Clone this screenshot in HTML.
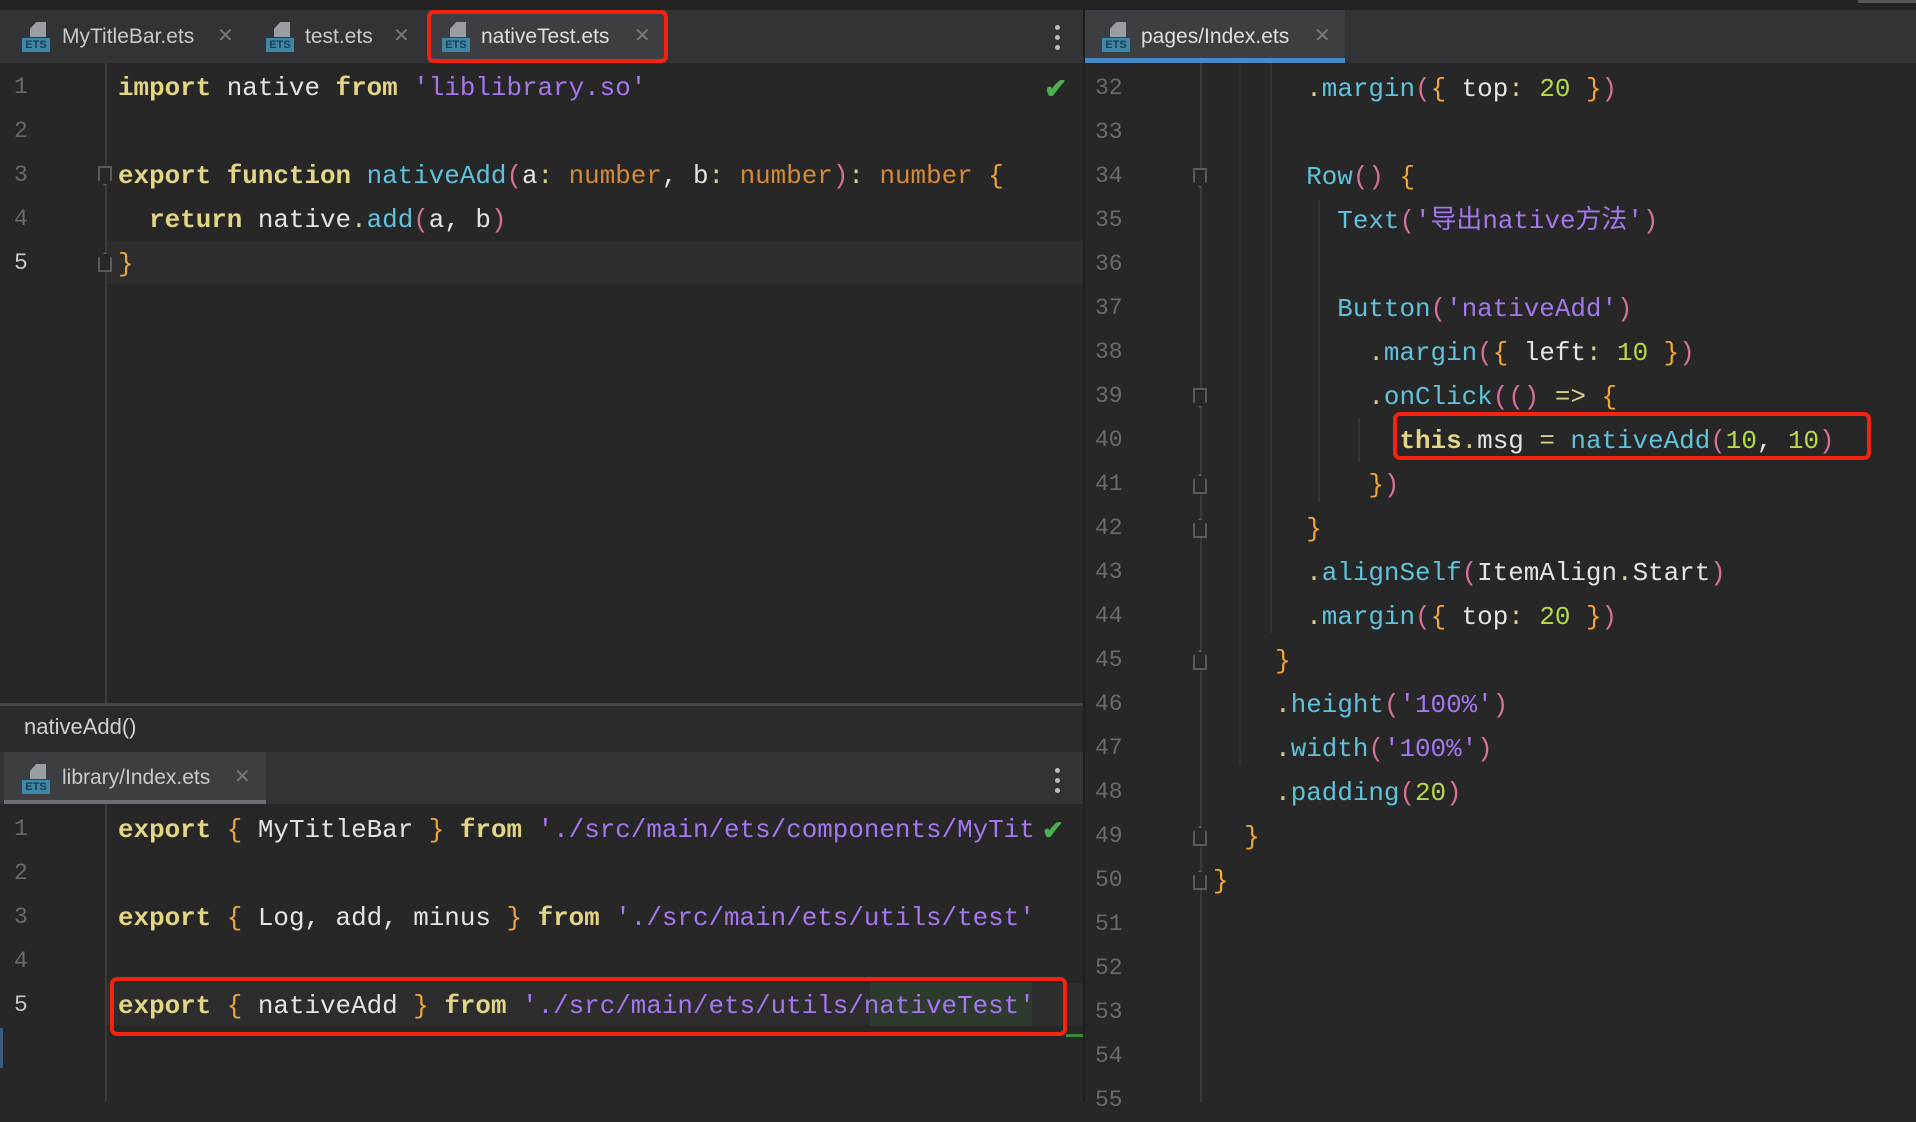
<!DOCTYPE html>
<html><head><meta charset="utf-8"><style>
*{margin:0;padding:0;box-sizing:border-box}
body{width:1916px;height:1102px;overflow:hidden;background:#272727;position:relative;font-family:"Liberation Sans","Noto Sans CJK SC",sans-serif}
.a{position:absolute}
.code{position:absolute;font-family:"Liberation Mono","Noto Sans CJK SC",monospace;font-size:25.9px;line-height:44px;height:44px;white-space:pre;color:#e4e4e4;margin-top:1px}
.ln{position:absolute;font-family:"Liberation Mono",monospace;font-size:23px;line-height:44px;color:#6a6a6a}
.k{color:#e2d584;font-weight:bold}.f{color:#5ec3dc}.s{color:#a477ef}.t{color:#d58a38}.b{color:#f3a43a}.p{color:#d6709a}.n{color:#b6da48}.o{color:#d8cd8a}
.tab{position:absolute;font-size:21px;color:#c9c9c9;line-height:30px}
.x{position:absolute;font-size:20px;color:#777;line-height:30px}
.ico{position:absolute;width:28px;height:30px}
.ico .d{position:absolute;left:8px;top:0;width:16px;height:15px;background:#9a9da1;clip-path:polygon(40% 0,100% 0,100% 100%,0 100%,0 45%)}
.ico .e{position:absolute;left:0;top:16px;width:28px;height:14px;background:#3d87a8;color:#1e3c4e;font-size:11px;font-weight:bold;line-height:14px;text-align:center;font-family:"Liberation Sans",sans-serif}
.red{position:absolute;border:4px solid #f5220f;border-radius:7px}
.fold{position:absolute;width:14px;height:20px;border:2px solid #5a5a5a;background:#272727}
.g{position:absolute;width:2px;background:#3a3a3a}
.dots{position:absolute;width:5px;height:5px;border-radius:50%;background:#bbb}
</style></head><body>
<div class="a" style="left:0;top:0;width:1916px;height:10px;background:#232323"></div>
<div class="a" style="left:1858px;top:0;width:58px;height:3px;background:#555"></div>
<div class="a" style="left:0;top:10px;width:1083px;height:53px;background:#323335"></div>
<div class="a" style="left:428px;top:10px;width:238px;height:53px;background:#3c3e41"></div>
<div class="ico" style="left:22px;top:22px"><div class="d"></div><div class="e">ETS</div></div>
<div class="tab" style="left:62px;top:22px">MyTitleBar.ets</div><div class="x" style="left:217px;top:21px">✕</div>
<div class="ico" style="left:266px;top:22px"><div class="d"></div><div class="e">ETS</div></div>
<div class="tab" style="left:305px;top:22px">test.ets</div><div class="x" style="left:393px;top:21px">✕</div>
<div class="ico" style="left:442px;top:22px"><div class="d"></div><div class="e">ETS</div></div>
<div class="tab" style="left:481px;top:22px;color:#dedede">nativeTest.ets</div><div class="x" style="left:634px;top:21px">✕</div>
<div class="red" style="left:427px;top:10px;width:241px;height:53px"></div>
<div class="dots" style="left:1055px;top:25px"></div><div class="dots" style="left:1055px;top:35px"></div><div class="dots" style="left:1055px;top:45px"></div>
<div class="a" style="left:0;top:63px;width:1083px;height:642px;background:#272727"></div>
<div class="a" style="left:106px;top:241px;width:977px;height:43px;background:#2d2d2d"></div>
<div class="g" style="left:105px;top:63px;height:642px"></div>
<div class="ln" style="left:14px;top:65px">1</div>
<div class="ln" style="left:14px;top:109px">2</div>
<div class="ln" style="left:14px;top:153px">3</div>
<div class="ln" style="left:14px;top:197px">4</div>
<div class="ln" style="left:14px;top:241px;color:#c8c8c8">5</div>
<div class="fold" style="left:98px;top:166px;clip-path:polygon(0 0,100% 0,100% 70%,50% 100%,0 70%)"></div>
<div class="fold" style="left:98px;top:252px;clip-path:polygon(50% 0,100% 30%,100% 100%,0 100%,0 30%)"></div>
<div class="code" style="left:118px;top:65px"><span class="k">import</span> native <span class="k">from</span> <span class="s">'liblibrary.so'</span></div>
<div class="code" style="left:118px;top:153px"><span class="k">export function</span> <span class="f">nativeAdd</span><span class="p">(</span>a<span class="o">:</span> <span class="t">number</span>, b<span class="o">:</span> <span class="t">number</span><span class="p">)</span><span class="o">:</span> <span class="t">number</span> <span class="b">{</span></div>
<div class="code" style="left:118px;top:197px">  <span class="k">return</span> native<span class="o">.</span><span class="f">add</span><span class="p">(</span>a, b<span class="p">)</span></div>
<div class="code" style="left:118px;top:241px"><span class="b">}</span></div>
<div class="a" style="left:1044px;top:72px;color:#4caf50;font-size:28px;font-weight:bold">✔</div>
<div class="a" style="left:0;top:703px;width:1083px;height:3px;background:#444"></div>
<div class="a" style="left:0;top:706px;width:1083px;height:46px;background:#2b2b2d"></div>
<div class="a" style="left:24px;top:714px;font-size:22px;color:#d0d0d0">nativeAdd()</div>
<div class="a" style="left:0;top:752px;width:1083px;height:52px;background:#323335"></div>
<div class="a" style="left:4px;top:752px;width:262px;height:52px;background:#3c3e41"></div>
<div class="a" style="left:4px;top:800px;width:262px;height:4px;background:#6b6e72"></div>
<div class="ico" style="left:22px;top:764px"><div class="d"></div><div class="e">ETS</div></div>
<div class="tab" style="left:62px;top:763px">library/Index.ets</div><div class="x" style="left:234px;top:762px">✕</div>
<div class="dots" style="left:1055px;top:768px"></div><div class="dots" style="left:1055px;top:778px"></div><div class="dots" style="left:1055px;top:788px"></div>
<div class="a" style="left:0;top:804px;width:1083px;height:298px;background:#272727"></div>
<div class="a" style="left:106px;top:983px;width:977px;height:43px;background:#2d2d2d"></div>
<div class="g" style="left:105px;top:804px;height:298px"></div>
<div class="a" style="left:0;top:1028px;width:3px;height:40px;background:#3b5b7a"></div>
<div class="ln" style="left:14px;top:807px">1</div>
<div class="ln" style="left:14px;top:851px">2</div>
<div class="ln" style="left:14px;top:895px">3</div>
<div class="ln" style="left:14px;top:939px">4</div>
<div class="ln" style="left:14px;top:983px;color:#c8c8c8">5</div>
<div class="a" style="left:870px;top:982px;width:162px;height:44px;background:#2f3a2f"></div>
<div class="code" style="left:118px;top:807px"><span class="k">export</span> <span class="b">{</span> MyTitleBar <span class="b">}</span> <span class="k">from</span> <span class="s">'./src/main/ets/components/MyTit</span></div>
<div class="a" style="left:1042px;top:815px;color:#4caf50;font-size:26px;font-weight:bold">✔</div>
<div class="code" style="left:118px;top:895px"><span class="k">export</span> <span class="b">{</span> Log, add, minus <span class="b">}</span> <span class="k">from</span> <span class="s">'./src/main/ets/utils/test'</span></div>
<div class="code" style="left:118px;top:983px"><span class="k">export</span> <span class="b">{</span> nativeAdd <span class="b">}</span> <span class="k">from</span> <span class="s">'./src/main/ets/utils/nativeTest'</span></div>
<div class="red" style="left:110px;top:977px;width:957px;height:59px"></div>
<div class="a" style="left:1066px;top:1034px;width:17px;height:3px;background:#3a8a3a"></div>
<div class="a" style="left:1083px;top:10px;width:2px;height:1092px;background:#1e1e1e"></div>
<div class="a" style="left:1085px;top:10px;width:831px;height:53px;background:#323335"></div>
<div class="a" style="left:1085px;top:10px;width:260px;height:53px;background:#3c3e41"></div>
<div class="a" style="left:1085px;top:58px;width:260px;height:5px;background:#4a88c7"></div>
<div class="ico" style="left:1102px;top:22px"><div class="d"></div><div class="e">ETS</div></div>
<div class="tab" style="left:1141px;top:22px;color:#dedede">pages/Index.ets</div><div class="x" style="left:1314px;top:21px">✕</div>
<div class="a" style="left:1085px;top:63px;width:831px;height:1039px;background:#272727"></div>
<div class="g" style="left:1200px;top:63px;height:1039px"></div>
<div class="g" style="left:1239px;top:63px;height:700px;background:#333"></div>
<div class="g" style="left:1270px;top:63px;height:570px;background:#333"></div>
<div class="g" style="left:1318px;top:200px;height:302px;background:#333"></div>
<div class="g" style="left:1358px;top:418px;height:44px;background:#333"></div>
<div class="ln" style="left:1095px;top:66px">32</div>
<div class="ln" style="left:1095px;top:110px">33</div>
<div class="ln" style="left:1095px;top:154px">34</div>
<div class="ln" style="left:1095px;top:198px">35</div>
<div class="ln" style="left:1095px;top:242px">36</div>
<div class="ln" style="left:1095px;top:286px">37</div>
<div class="ln" style="left:1095px;top:330px">38</div>
<div class="ln" style="left:1095px;top:374px">39</div>
<div class="ln" style="left:1095px;top:418px">40</div>
<div class="ln" style="left:1095px;top:462px">41</div>
<div class="ln" style="left:1095px;top:506px">42</div>
<div class="ln" style="left:1095px;top:550px">43</div>
<div class="ln" style="left:1095px;top:594px">44</div>
<div class="ln" style="left:1095px;top:638px">45</div>
<div class="ln" style="left:1095px;top:682px">46</div>
<div class="ln" style="left:1095px;top:726px">47</div>
<div class="ln" style="left:1095px;top:770px">48</div>
<div class="ln" style="left:1095px;top:814px">49</div>
<div class="ln" style="left:1095px;top:858px">50</div>
<div class="ln" style="left:1095px;top:902px">51</div>
<div class="ln" style="left:1095px;top:946px">52</div>
<div class="ln" style="left:1095px;top:990px">53</div>
<div class="ln" style="left:1095px;top:1034px">54</div>
<div class="ln" style="left:1095px;top:1078px">55</div>
<div class="fold" style="left:1193px;top:168px;clip-path:polygon(0 0,100% 0,100% 70%,50% 100%,0 70%)"></div>
<div class="fold" style="left:1193px;top:388px;clip-path:polygon(0 0,100% 0,100% 70%,50% 100%,0 70%)"></div>
<div class="fold" style="left:1193px;top:474px;clip-path:polygon(50% 0,100% 30%,100% 100%,0 100%,0 30%)"></div>
<div class="fold" style="left:1193px;top:518px;clip-path:polygon(50% 0,100% 30%,100% 100%,0 100%,0 30%)"></div>
<div class="fold" style="left:1193px;top:650px;clip-path:polygon(50% 0,100% 30%,100% 100%,0 100%,0 30%)"></div>
<div class="fold" style="left:1193px;top:826px;clip-path:polygon(50% 0,100% 30%,100% 100%,0 100%,0 30%)"></div>
<div class="fold" style="left:1193px;top:870px;clip-path:polygon(50% 0,100% 30%,100% 100%,0 100%,0 30%)"></div>
<div class="code" style="left:1213px;top:66px">      <span class="o">.</span><span class="f">margin</span><span class="p">(</span><span class="b">{</span> top<span class="o">:</span> <span class="n">20</span> <span class="b">}</span><span class="p">)</span></div>
<div class="code" style="left:1213px;top:154px">      <span class="f">Row</span><span class="p">()</span> <span class="b">{</span></div>
<div class="code" style="left:1213px;top:198px">        <span class="f">Text</span><span class="p">(</span><span class="s">'导出native方法'</span><span class="p">)</span></div>
<div class="code" style="left:1213px;top:286px">        <span class="f">Button</span><span class="p">(</span><span class="s">'nativeAdd'</span><span class="p">)</span></div>
<div class="code" style="left:1213px;top:330px">          <span class="o">.</span><span class="f">margin</span><span class="p">(</span><span class="b">{</span> left<span class="o">:</span> <span class="n">10</span> <span class="b">}</span><span class="p">)</span></div>
<div class="code" style="left:1213px;top:374px">          <span class="o">.</span><span class="f">onClick</span><span class="p">(()</span> <span class="o">=&gt;</span> <span class="b">{</span></div>
<div class="code" style="left:1213px;top:418px">            <span class="k">this</span><span class="o">.</span>msg <span class="o">=</span> <span class="f">nativeAdd</span><span class="p">(</span><span class="n">10</span>, <span class="n">10</span><span class="p">)</span></div>
<div class="code" style="left:1213px;top:462px">          <span class="b">}</span><span class="p">)</span></div>
<div class="code" style="left:1213px;top:506px">      <span class="b">}</span></div>
<div class="code" style="left:1213px;top:550px">      <span class="o">.</span><span class="f">alignSelf</span><span class="p">(</span>ItemAlign<span class="o">.</span>Start<span class="p">)</span></div>
<div class="code" style="left:1213px;top:594px">      <span class="o">.</span><span class="f">margin</span><span class="p">(</span><span class="b">{</span> top<span class="o">:</span> <span class="n">20</span> <span class="b">}</span><span class="p">)</span></div>
<div class="code" style="left:1213px;top:638px">    <span class="b">}</span></div>
<div class="code" style="left:1213px;top:682px">    <span class="o">.</span><span class="f">height</span><span class="p">(</span><span class="s">'100%'</span><span class="p">)</span></div>
<div class="code" style="left:1213px;top:726px">    <span class="o">.</span><span class="f">width</span><span class="p">(</span><span class="s">'100%'</span><span class="p">)</span></div>
<div class="code" style="left:1213px;top:770px">    <span class="o">.</span><span class="f">padding</span><span class="p">(</span><span class="n">20</span><span class="p">)</span></div>
<div class="code" style="left:1213px;top:814px">  <span class="b">}</span></div>
<div class="code" style="left:1213px;top:858px"><span class="b">}</span></div>
<div class="red" style="left:1393px;top:412px;width:478px;height:48px"></div>
</body></html>
